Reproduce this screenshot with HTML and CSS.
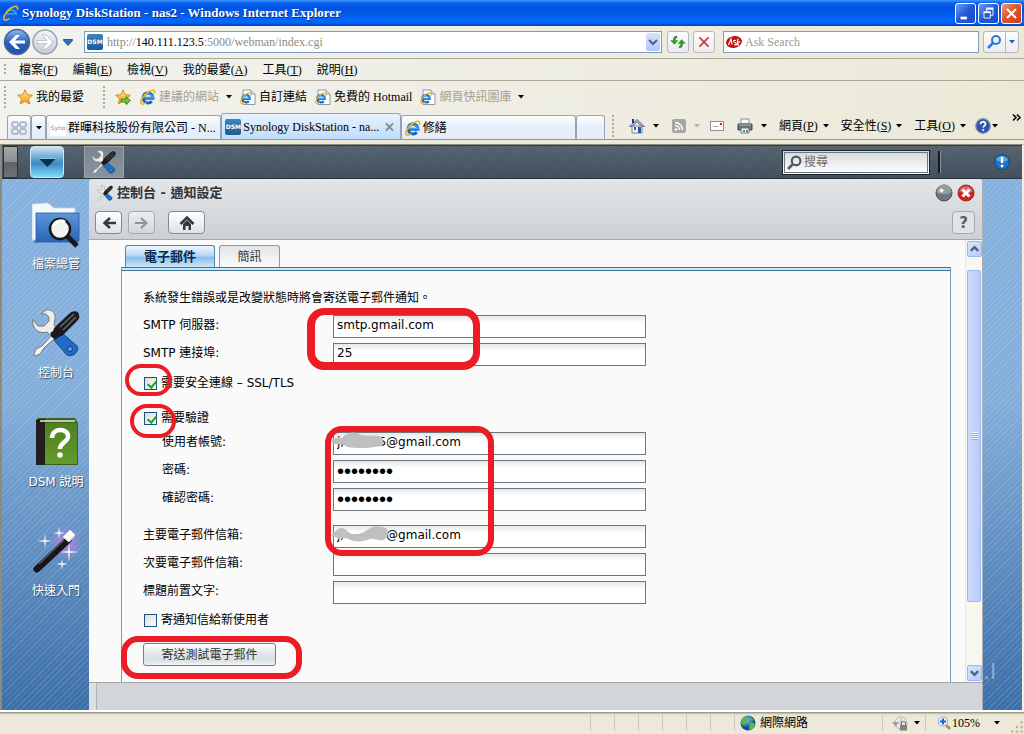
FILE: index.html
```html
<!DOCTYPE html>
<html lang="zh-Hant">
<head>
<meta charset="utf-8">
<title>Synology DiskStation - nas2</title>
<link rel="stylesheet" href="styles.css">
</head>
<body>
<svg class="defs" aria-hidden="true">
  <defs>
    <linearGradient id="gGold" x1="0" y1="0" x2="0" y2="1"><stop offset="0" stop-color="#ffe98a"/><stop offset="1" stop-color="#f59a12"/></linearGradient>
    <linearGradient id="gBlue" x1="0" y1="0" x2="0" y2="1"><stop offset="0" stop-color="#8fbcf0"/><stop offset=".5" stop-color="#2b62bd"/><stop offset="1" stop-color="#1c4fae"/></linearGradient>
    <linearGradient id="gSilver" x1="0" y1="0" x2="0" y2="1"><stop offset="0" stop-color="#f4f6f9"/><stop offset="1" stop-color="#c3cad6"/></linearGradient>
    <linearGradient id="gFolder" x1="0" y1="0" x2="0" y2="1"><stop offset="0" stop-color="#5d97d8"/><stop offset="1" stop-color="#2b62b8"/></linearGradient>
    <linearGradient id="gGreen" x1="0" y1="0" x2="0" y2="1"><stop offset="0" stop-color="#50801f"/><stop offset="1" stop-color="#639a2c"/></linearGradient>
    <radialGradient id="gGlow"><stop offset="0" stop-color="#c879e8" stop-opacity=".9"/><stop offset="1" stop-color="#b98ae6" stop-opacity="0"/></radialGradient>
    <radialGradient id="gGlobe" cx=".4" cy=".3"><stop offset="0" stop-color="#8cc4ff"/><stop offset="1" stop-color="#124a9e"/></radialGradient>
  </defs>
  <symbol id="ie" viewBox="0 0 16 16">
    <path d="M3.500 9.300H13A5 5 0 1 0 11.800 12.200" fill="none" stroke="#1668c4" stroke-width="3"/>
    <path d="M4 8.800H13.500A5.500 5 0 0 0 4.500 6.500" fill="none" stroke="#3ba0ee" stroke-width="1.600"/>
    <path d="M14.300 5C16 .6 12 .4 8.200 3 3.200 6.300-.6 12.600 1.300 14.600c1 1 3.200.2 5-1" fill="none" stroke="#f4b41c" stroke-width="1.600"/>
  </symbol>
  <symbol id="page" viewBox="0 0 16 16">
    <path d="M3 1h8l4 4v10.500H3z" fill="#fff" stroke="#8f98a8"/><path d="M11 1v4h4" fill="#dfe5ef" stroke="#8f98a8"/>
    <svg x="0" y="3" width="12" height="12" viewBox="0 0 16 16"><use href="#ie"/></svg>
  </symbol>
  <symbol id="star" viewBox="0 0 16 16"><path d="M8 .8l2.200 4.900 5.200.5-3.900 3.500 1.200 5.300L8 12.300 3.300 15l1.200-5.300L.6 6.200l5.200-.5z" fill="url(#gGold)" stroke="#d97f10" stroke-width=".9"/></symbol>
  <symbol id="tools" viewBox="0 0 48 48">
    <path d="M9 5l5-4c6-1 10 3 9 9l-1 6 7 8-7 6-7-7c-7 2-13-2-14-8l-1-5 6 7 6 0 5-5 0-4-3-3z" fill="#ededed" stroke="#7a7a7a" stroke-width="1"/>
    <path d="M29 23l16 14c2 3 0 7-4 9-3 1-5 1-7-1L22 31z" fill="#2369c8" stroke="#174883"/>
    <circle cx="38" cy="40" r="2.500" fill="#68a2e8" stroke="#0e3974"/>
    <path d="M21 25L10 37l-6 3-2 5 1 2 5-2 4-6 12-11z" fill="#f5f5f5" stroke="#757575"/>
    <path d="M19 23c3 0 2-3 4-5L38 4c4-3 9-2 9 2 1 2 0 4-2 6L31 26c-2 2-5 1-6 4-3 1-8-3-6-7z" fill="#191b1f"/>
    <path d="M28 18L42 5M31 21L44 8" stroke="#646970" stroke-width="1.500"/>
  </symbol>
  <symbol id="caret" viewBox="0 0 6 4"><path d="M0 0h6L3 3.500z" fill="currentColor"/></symbol>
</svg>

<header class="browser">
  <div class="titlebar">
    <svg class="i16" viewBox="0 0 16 16"><use href="#ie"/></svg>
    <h1 class="title-text">Synology DiskStation - nas2 - Windows Internet Explorer</h1>
    <div class="win-controls">
      <button class="wc" aria-label="最小化"><svg viewBox="0 0 21 21"><path d="M5 14h7v3H5z" fill="#fff"/></svg></button>
      <button class="wc" aria-label="還原"><svg viewBox="0 0 21 21" fill="none" stroke="#fff"><path d="M8.500 8V5.500h7v7H13"/><path d="M8 5h8M5 9h8" stroke-width="2"/><path d="M5.500 9.500h7v6h-7z"/></svg></button>
      <button class="wc wc-close" aria-label="關閉"><svg viewBox="0 0 21 21"><path d="M5.500 5.500l10 10m0-10l-10 10" stroke="#fff" stroke-width="2.200"/></svg></button>
    </div>
  </div>

  <div class="address-row">
    <div class="nav">
      <button class="nav-btn" aria-label="上一頁"><svg viewBox="0 0 28 28"><circle cx="14" cy="14" r="12.500" fill="url(#gBlue)" stroke="#4d618c" stroke-width="1.500"/><path d="M6 14l7-7h4l-5 5.500h10v3H12l5 5.500h-4z" fill="#fff"/></svg></button>
      <button class="nav-btn" aria-label="下一頁"><svg viewBox="0 0 28 28"><circle cx="14" cy="14" r="12" fill="url(#gSilver)" stroke="#98a3b5" stroke-width="1.500"/><path d="M22 14l-7-7h-4l5 5.500H6v3h10L11 21h4z" fill="#fff" stroke="#aab3c2" stroke-width=".7"/></svg></button>
      <button class="nav-more" aria-label="最近的網頁"><svg viewBox="0 0 10 7"><path d="M.5.500h9v1L5 6.500.5 1.500z" fill="#2b72b8" stroke="#12457e" stroke-width=".8"/></svg></button>
    </div>
    <div class="address">
      <span class="dsm-icon">DSM</span>
      <a class="url" href="#address">http://<b>140.111.123.5</b>:5000/webman/index.cgi</a>
      <button class="drop" aria-label="網址清單"><svg viewBox="0 0 14 18"><path d="M3 7l4 4 4-4" fill="none" stroke="#4a5f8c" stroke-width="2"/></svg></button>
    </div>
    <button class="tool-btn" aria-label="重新整理"><svg viewBox="0 0 22 22" fill="#2f9b28"><path d="M10 4C7 4 5.500 5.500 5.500 9H2.500l4.500 5 4.500-5H8.300c0-1.500.5-2.300 1.700-2.500z"/><path d="M12 18c3 0 4.500-1.500 4.500-5h3L15 8l-4.500 5h3.200c0 1.500-.5 2.300-1.700 2.500z"/></svg></button>
    <button class="tool-btn stop" aria-label="停止"><svg viewBox="0 0 22 22"><path d="M6 6l10 10m0-10L6 16" stroke="#cb4240" stroke-width="2"/></svg></button>
    <div class="search">
      <svg class="i16" viewBox="0 0 16 16"><ellipse cx="8" cy="8" rx="8" ry="6" transform="rotate(-12 8 8)" fill="#c4100f"/><path d="M2.500 11l2.500-6 1 5.500m4-4c-3-1-3 1-1 2s1 3-1 2m4-6l-1 7m3-4l-3 2 2 2" fill="none" stroke="#fff" stroke-width="1.200"/></svg>
      <input class="search-input" type="text" placeholder="Ask Search" aria-label="Ask Search">
    </div>
    <div class="search-go">
      <button class="go" aria-label="搜尋"><svg viewBox="0 0 20 20" fill="none" stroke="#2875d8"><circle cx="12" cy="8" r="4" stroke-width="2"/><path d="M9 11l-5 5" stroke-width="2.500"/></svg></button>
      <button class="go-more" aria-label="搜尋選項"><svg class="caret" viewBox="0 0 6 4"><use href="#caret"/></svg></button>
    </div>
  </div>

  <nav class="menu">
    <span class="grip"></span>
    <a href="#m1">檔案(<u>F</u>)</a><a href="#m2">編輯(<u>E</u>)</a><a href="#m3">檢視(<u>V</u>)</a><a href="#m4">我的最愛(<u>A</u>)</a><a href="#m5">工具(<u>T</u>)</a><a href="#m6">說明(<u>H</u>)</a>
  </nav>

  <nav class="favorites">
    <span class="grip tall"></span>
    <a class="fav" href="#f0"><svg class="i16" viewBox="0 0 16 16"><use href="#star"/></svg>我的最愛</a>
    <span class="grip tall fav-grip"></span>
    <button class="plain" aria-label="加到我的最愛列"><svg class="i16" viewBox="0 0 16 16"><use href="#star"/><path d="M6 10h5V7.500l4.500 4-4.500 4V13H6z" fill="#65c94b" stroke="#2c8020" stroke-width=".8"/></svg></button>
    <div class="links">
      <a class="fav dim" href="#f1"><svg class="i16" viewBox="0 0 16 16"><use href="#ie"/></svg>建議的網站<svg class="caret after" viewBox="0 0 6 4"><use href="#caret"/></svg></a>
      <a class="fav" href="#f2"><svg class="i16" viewBox="0 0 16 16"><use href="#page"/></svg>自訂連結</a>
      <a class="fav" href="#f3"><svg class="i16" viewBox="0 0 16 16"><use href="#page"/></svg>免費的 Hotmail</a>
      <a class="fav dim" href="#f4"><svg class="i16" viewBox="0 0 16 16"><use href="#page"/></svg>網頁快訊圖庫<svg class="caret after" viewBox="0 0 6 4"><use href="#caret"/></svg></a>
    </div>
  </nav>

  <div class="tab-row">
    <div class="tabs">
      <button class="tab quick" aria-label="快速索引標籤"><svg class="i16" viewBox="0 0 16 16" fill="#e8ebf2" stroke="#838ca4"><rect x="1" y="2" width="6" height="5" rx="1"/><rect x="9" y="2" width="6" height="5" rx="1"/><rect x="1" y="9" width="6" height="5" rx="1"/><rect x="9" y="9" width="6" height="5" rx="1"/></svg></button>
      <button class="tab quick-more" aria-label="索引標籤清單"><svg class="caret" viewBox="0 0 6 4"><use href="#caret"/></svg></button>
      <button class="tab"><span class="syno">Syno</span><span class="tab-label">群暉科技股份有限公司 - N...</span></button>
      <button class="tab active"><span class="dsm-icon">DSM</span><span class="tab-label">Synology DiskStation - na...</span><svg class="tab-x" viewBox="0 0 10 10"><path d="M1 1l8 8m0-8L1 9" stroke="#7f8794" stroke-width="2"/></svg></button>
      <button class="tab"><svg class="i16" viewBox="0 0 16 16"><use href="#ie"/></svg><span class="tab-label">修繕</span></button>
      <button class="tab new" aria-label="新索引標籤"></button>
    </div>
    <div class="commands">
      <span class="grip tall"></span>
      <button class="cmd" aria-label="首頁"><svg class="i16" viewBox="0 0 16 16"><path d="M3 8h10v7H3z" fill="#eef1f6" stroke="#7b8594"/><path d="M.5 8.500L8 1.500l7.500 7H13L8 4 3 8.500z" fill="#a9b4c4" stroke="#56627a" stroke-width=".8"/><path d="M3 1h2v4H3z" fill="#1434b0"/><path d="M9 9h3v6H9z" fill="#2b56a8"/><path d="M5 9h2v3H5z" fill="#59606e"/></svg><svg class="caret" viewBox="0 0 6 4"><use href="#caret"/></svg></button>
      <button class="cmd pale" aria-label="摘要"><svg class="i14" viewBox="0 0 14 14"><rect width="14" height="14" rx="2" fill="#a5a5a3"/><circle cx="4" cy="10.500" r="1.300" fill="#fff"/><path d="M3 6.500a4.500 4.500 0 0 1 4.500 4.500M3 3.500A7.500 7.500 0 0 1 10.500 11" fill="none" stroke="#fff" stroke-width="1.500"/></svg><svg class="caret" viewBox="0 0 6 4"><use href="#caret"/></svg></button>
      <button class="cmd mail" aria-label="讀取郵件"><svg class="i14" viewBox="0 0 14 10"><rect x=".5" y=".5" width="13" height="9" fill="#fff" stroke="#8b8f98"/><path d="M10 2h2v2h-2z" fill="#d22"/><path d="M3 5.500h5" stroke="#9aa"/></svg></button>
      <button class="cmd" aria-label="列印"><svg class="i16" viewBox="0 0 16 16"><path d="M4 1h8v5H4z" fill="#fff" stroke="#8a8a8a"/><path d="M1 6h14v6H1z" fill="#6a6f78" stroke="#454950"/><path d="M2 7h12" stroke="#b9bdc5"/><path d="M4 10h8v5H4z" fill="#eef" stroke="#777"/><path d="M6 12h2v2H6z" fill="#3a7"/><path d="M9 12h2v2H9z" fill="#38c"/></svg><svg class="caret" viewBox="0 0 6 4"><use href="#caret"/></svg></button>
      <button class="cmd word"><span>網頁(<u>P</u>)</span><svg class="caret" viewBox="0 0 6 4"><use href="#caret"/></svg></button>
      <button class="cmd word"><span>安全性(<u>S</u>)</span><svg class="caret" viewBox="0 0 6 4"><use href="#caret"/></svg></button>
      <button class="cmd word"><span>工具(<u>O</u>)</span><svg class="caret" viewBox="0 0 6 4"><use href="#caret"/></svg></button>
      <button class="cmd help" aria-label="說明"><svg class="i16" viewBox="0 0 16 16"><circle cx="8" cy="8" r="7.300" fill="#2b55ad" stroke="#8b95ad" stroke-width="1.200"/><path d="M5.500 6.200c0-3.200 5-3.200 5-.2 0 1.800-2.300 1.900-2.300 3.500" fill="none" stroke="#fff" stroke-width="1.800"/><circle cx="8.200" cy="12" r="1.100" fill="#fff"/></svg><svg class="caret" viewBox="0 0 6 4"><use href="#caret"/></svg></button>
      <button class="more" aria-label="更多"><svg viewBox="0 0 9 7"><path d="M1 .5l3 3-3 3m4-6l3 3-3 3" fill="none" stroke="#000" stroke-width="1.500"/></svg></button>
    </div>
  </div>
</header>

<main class="desktop">
  <div class="taskbar">
    <button class="show-desktop" aria-label="顯示桌面"></button>
    <button class="main-menu" aria-label="主選單"><svg viewBox="0 0 33 33"><path d="M8 13h18l-9 9z" fill="#0d2f55"/><path d="M8 12.500h18" stroke="#9fd4f2"/></svg></button>
    <button class="task" aria-label="控制台"><svg viewBox="0 0 48 48"><use href="#tools"/></svg></button>
    <div class="dsm-search">
      <svg viewBox="0 0 14 14" fill="none" stroke="#4f565d"><circle cx="8.500" cy="5.500" r="4" stroke-width="2"/><path d="M5 9l-4 4" stroke-width="2.500"/></svg>
      <input class="dsm-search-input" type="text" placeholder="搜尋" aria-label="搜尋">
    </div>
    <span class="split"></span>
    <button class="alert" aria-label="通知"><svg viewBox="0 0 16 16"><circle cx="8" cy="8" r="7.500" fill="#1f74c4" stroke="#0c4687"/><path d="M2 6a6.500 6.500 0 0 1 12 0c-3 2-9 2-12 0z" fill="#5ca5e3"/><path d="M8 3v6" stroke="#fff" stroke-width="2.400"/><circle cx="8" cy="12" r="1.400" fill="#fff"/></svg></button>
  </div>

  <div class="workspace">
    <nav class="shortcuts">
      <a class="shortcut" href="#files"><svg viewBox="0 0 48 48"><path d="M0 4l16-1 6 5h21v32H0z" fill="#f3f8fc" stroke="#c2d2e5" stroke-width=".8"/><path d="M4 13h43v27c0 1-1 2-2 2H2c2 0 2-2 2-4z" fill="url(#gFolder)" stroke="#255aa6" stroke-width=".8"/><path d="M35 36l10 10" stroke="#171b18" stroke-width="5"/><circle cx="28" cy="29" r="10" fill="#f2f2f0" stroke="#14181c" stroke-width="2.500"/><path d="M21 27a8 8 0 0 1 12-5" fill="none" stroke="#fff" stroke-width="3"/></svg>檔案總管</a>
      <a class="shortcut" href="#panel"><svg viewBox="0 0 48 48"><use href="#tools"/></svg>控制台</a>
      <a class="shortcut" href="#help"><svg viewBox="0 0 48 48"><path d="M6 0h37l3 5v42H4V3z" fill="#3b621c"/><path d="M4 2l3-1h6v46H4z" fill="#221e20"/><path d="M13 5h32v41H13z" fill="url(#gGreen)"/><path d="M8 3h35" stroke="#e9f0df" stroke-width="1.500"/><path d="M20 20c0-11 17-10 16-1-1 6-8 5-8 12" fill="none" stroke="#fff" stroke-width="4.500"/><circle cx="28" cy="37" r="2.800" fill="#fff"/></svg>DSM 說明</a>
      <a class="shortcut" href="#start"><svg viewBox="0 0 48 48"><circle cx="34" cy="16" r="17" fill="url(#gGlow)"/><path d="M5 42L36 13" stroke="#17171b" stroke-width="7" stroke-linecap="round"/><path d="M7 37L32 13" stroke="#55555e" stroke-width="1.500"/><path d="M31 10l7-7 5 5-6 7z" fill="#fff" stroke="#e4daf0"/><g fill="#fff" fill-opacity=".85"><path d="M13 6l.8 7 6 1-6 1-.8 7-.8-7-7-1 7-1z"/><path d="M27 0l.8 5 5 1-5 1-.8 5-.8-5-5-1 5-1z"/><path d="M37 16l1 8 9 1-9 1-1 9-1-9-9-1 9-1z"/><path d="M30 32l.8 4 5 1-5 1-.8 5-.8-5-5-1 5-1z"/></g></svg>快速入門</a>
    </nav>

    <section class="window">
      <div class="window-head">
        <div class="window-title">
          <svg class="i16" viewBox="0 0 48 48"><use href="#tools"/></svg>
          <h2 class="window-name">控制台 - 通知設定</h2>
          <button class="orb" aria-label="最小化"><svg viewBox="0 0 18 18"><circle cx="9" cy="9" r="8" fill="#70767b" stroke="#4b5155"/><path d="M1.500 8a7.500 7.500 0 0 1 15 0c-4 3-11 3-15 0z" fill="#969ca0"/><circle cx="6.500" cy="6.500" r="2" fill="#f2f5f6"/></svg></button>
          <button class="orb" aria-label="關閉"><svg viewBox="0 0 18 18"><circle cx="9" cy="9" r="8" fill="#c82520" stroke="#b3211d"/><path d="M2 7a7.500 7.500 0 0 1 14 0c-4 3-10 3-14 0z" fill="#df6a65"/><path d="M5.500 5.500l7 7m0-7l-7 7" stroke="#fff" stroke-width="3"/></svg></button>
        </div>
        <div class="window-tools">
          <button class="wbtn" aria-label="返回"><svg viewBox="0 0 16 16"><path d="M15 8H3m6-5L3.500 8 9 13" fill="none" stroke="#33393e" stroke-width="2.500"/></svg></button>
          <button class="wbtn off" aria-label="前進"><svg viewBox="0 0 16 16"><path d="M1 8h12M7 3l5.500 5L7 13" fill="none" stroke="#8c9297" stroke-width="2"/></svg></button>
          <button class="wbtn home" aria-label="首頁"><svg viewBox="0 0 16 16"><path d="M1.500 9L8 2.500 14.500 9" fill="none" stroke="#33393e" stroke-width="2.500"/><path d="M4 9l4-4 4 4v6H9.500v-4h-3v4H4z" fill="#33393e"/></svg></button>
          <button class="wbtn ask" aria-label="說明">?</button>
        </div>
      </div>

      <div class="window-body">
        <div class="content">
          <div class="page-tabs" role="tablist">
            <button class="page-tab selected" role="tab" aria-selected="true">電子郵件</button>
            <button class="page-tab" role="tab">簡訊</button>
          </div>
          <form class="panel">
            <div class="panel-strip"></div>
            <div class="fields">
              <p class="intro">系統發生錯誤或是改變狀態時將會寄送電子郵件通知。</p>
              <div class="row"><label class="lbl" for="host">SMTP 伺服器:</label><input class="box" id="host" type="text" value="smtp.gmail.com"></div>
              <div class="row"><label class="lbl" for="port">SMTP 連接埠:</label><input class="box" id="port" type="text" value="25"></div>
              <div class="check-row ssl"><input class="check" id="ssl" type="checkbox" checked><label for="ssl">需要安全連線 – SSL/TLS</label></div>
              <div class="check-row auth"><input class="check" id="auth" type="checkbox" checked><label for="auth">需要驗證</label></div>
              <div class="row inner"><label class="lbl" for="user">使用者帳號:</label><span class="cover"><input class="box" id="user" type="text" value="j,         5@gmail.com"><svg class="smudge" viewBox="0 0 60 20"><path d="M1 8c4-4 8-1 11-3 6-6 14-5 18-2 5 1 12 0 18 1 5 1 5 7 3 10-12 2-24 3-35 1-3-3-6-2-8-3-5 1-9-1-7-4z" fill="#bfbfbf"/></svg></span></div>
              <div class="row inner"><label class="lbl" for="pass">密碼:</label><input class="box pass" id="pass" type="password" value="abcdefgh"></div>
              <div class="row inner"><label class="lbl" for="pass2">確認密碼:</label><input class="box pass" id="pass2" type="password" value="abcdefgh"></div>
              <div class="row first-mail"><label class="lbl" for="mail1">主要電子郵件信箱:</label><span class="cover"><input class="box" id="mail1" type="text" value="j,         5@gmail.com"><svg class="smudge" viewBox="0 0 60 20"><path d="M0 10c4-2 6-7 11-7 5 1 7 7 13 6 6 0 9-2 14-5 5-4 14-3 18 0 2 5 0 10-4 11-5 1-9-2-13-1-6 3-16 3-20 1-4-3-8-1-11-1-3-1-5-3-8-4z" fill="#bfbfbf"/></svg></span></div>
              <div class="row"><label class="lbl" for="mail2">次要電子郵件信箱:</label><input class="box" id="mail2" type="text"></div>
              <div class="row"><label class="lbl" for="subject">標題前置文字:</label><input class="box" id="subject" type="text"></div>
              <div class="check-row welcome"><input class="check" id="welcome" type="checkbox"><label for="welcome">寄通知信給新使用者</label></div>
              <button class="send" type="button">寄送測試電子郵件</button>
            </div>
            <span class="mark mark-server"></span>
            <span class="mark mark-ssl"></span>
            <span class="mark mark-auth"></span>
            <span class="mark mark-account"></span>
            <span class="mark mark-send"></span>
          </form>
        </div>
        <div class="scrollbar">
          <button class="sb-btn" aria-label="向上捲動"><svg viewBox="0 0 14 14"><path d="M3 9l4-4 4 4" fill="none" stroke="#4d6185" stroke-width="2.500"/></svg></button>
          <div class="sb-track"><div class="sb-thumb"><span class="sb-grip"></span></div></div>
          <button class="sb-btn" aria-label="向下捲動"><svg viewBox="0 0 14 14"><path d="M3 5l4 4 4-4" fill="none" stroke="#4d6185" stroke-width="2.500"/></svg></button>
        </div>
      </div>
      <div class="window-foot"></div>
    </section>
    <div class="backdrop"><span class="backdrop-text">.l</span></div>
  </div>
</main>

<footer class="status">
  <span class="cell"></span><span class="cell"></span><span class="cell"></span><span class="cell"></span><span class="cell"></span><span class="cell"></span>
  <span class="zone"><svg class="i16" viewBox="0 0 16 16"><circle cx="8" cy="8" r="7.500" fill="url(#gGlobe)"/><path d="M2 4c3-4 6-2 6 0S5 7 5 9s-2 2-4-1zM9 8c3-2 5 0 6 1-1 4-3 6-5 6-2-2 0-4-1-7zM10 2l4 3-3 1z" fill="#5cba3a"/></svg>網際網路</span>
  <span class="lock"><svg class="i16" viewBox="0 0 16 16"><circle cx="9" cy="8" r="6" fill="#e7e7e7" stroke="#b5b5b5"/><path d="M9 4v4H5" fill="none" stroke="#aaa"/><path d="M0 7l4 5 2-5z" fill="#9c9c9c"/><path d="M8 10h7v5.500H8z" fill="#808080"/><path d="M9.500 10V8c0-2 4-2 4 0v2" fill="none" stroke="#777" stroke-width="1.200"/></svg><svg class="caret" viewBox="0 0 6 4"><use href="#caret"/></svg></span>
  <button class="zoom"><svg class="i14" viewBox="0 0 14 14"><path d="M8 8l5 5" stroke="#a98a6a" stroke-width="2.500"/><circle cx="6" cy="5.500" r="4.700" fill="#e6f1fd" stroke="#9cabc6"/><path d="M6 2.500v6M3 5.500h6" stroke="#1b66c9" stroke-width="2"/></svg><span class="pct">105%</span><svg class="caret" viewBox="0 0 6 4"><use href="#caret"/></svg></button>
  <svg class="resize" viewBox="0 0 12 12" fill="#b9b5a0"><path d="M9 1h2v2H9zM9 5h2v2H9zM9 9h2v2H9zM5 5h2v2H5zM5 9h2v2H5zM1 9h2v2H1z"/></svg>
</footer>
</body>
</html>
```

FILE: styles.css
```css
* { box-sizing: border-box; }
body {
  margin: 0;
  min-height: 100vh;
  display: flex;
  flex-direction: column;
  background: #ece9d8;
  color: #000;
  font: 12px/16px "Liberation Serif", "Noto Sans CJK TC", serif;
}
button { padding: 0; margin: 0; border: 0; background: none; font: inherit; color: inherit; }
input { font: inherit; }
a { color: inherit; text-decoration: none; }
svg { display: block; flex: none; }
.defs { position: absolute; width: 0; height: 0; }
.i16 { width: 16px; height: 16px; }
.i14 { width: 14px; height: 14px; }
.caret { width: 6px; height: 4px; }
.grip { flex: none; width: 2px; height: 12px; background: repeating-linear-gradient(#aaa79b 0 2px, transparent 2px 4px); }
.grip.tall { height: 22px; }

/* Title bar */
.titlebar {
  display: flex;
  align-items: center;
  height: 26px;
  padding: 0 2px 0 3px;
  background: linear-gradient(#3d95ff 0, #0a63ee 3px, #0253e0 8px, #0259ea 14px, #0268ff 20px, #0262f5 23px, #0040c0 26px);
}
.title-text {
  flex: 1;
  margin: 0 0 0 3px;
  color: #fff;
  font-size: 13px;
  font-weight: bold;
  text-shadow: 1px 1px 0 #0a2a80;
}
.win-controls { display: flex; gap: 2px; }
.wc {
  width: 21px;
  height: 21px;
  border: 1px solid #fff;
  border-radius: 3px;
  background: linear-gradient(135deg, #6f9bf2, #2357d8 50%, #1b4bcb);
}
.wc-close { background: linear-gradient(135deg, #ee9a7c, #dd5630 45%, #c73c16); }
.wc svg { width: 19px; height: 19px; }

/* Address row */
.address-row {
  display: flex;
  align-items: center;
  height: 33px;
  padding: 0 5px 0 3px;
  border-bottom: 1px solid #aca899;
  background: linear-gradient(90deg, #f2f2ee, #ece9d8);
}
.nav { display: flex; align-items: center; flex: none; width: 81px; }
.nav-btn, .nav-btn svg { width: 28px; height: 28px; }
.nav-more { margin-left: 4px; }
.nav-more svg { width: 10px; height: 7px; }
.address, .search {
  display: flex;
  align-items: center;
  height: 22px;
  border: 1px solid #7f9db9;
  background: #fff;
}
.address { flex: 580 1 0; gap: 4px; padding: 1px 1px 1px 2px; }
.dsm-icon {
  flex: none;
  width: 16px;
  height: 16px;
  border-radius: 2px;
  background: linear-gradient(#3f84bd, #1d5a94);
  color: #fff;
  font: bold 6px/16px "DejaVu Sans", sans-serif;
  text-align: center;
}
.url { flex: 1; color: #8c8c84; }
.url b { color: #000; font-weight: normal; }
.drop { width: 14px; height: 18px; border-radius: 2px; background: linear-gradient(#d7e3fc, #b3c7f8); }
.tool-btn {
  flex: none;
  width: 22px;
  height: 22px;
  margin-left: 5px;
  border: 1px solid #b3b8c2;
  border-radius: 3px;
  background: linear-gradient(#fcfcfc, #ebebf1);
}
.tool-btn svg { width: 20px; height: 20px; }
.stop { margin: 0 8px 0 4px; }
.search { flex: 253 1 0; gap: 3px; padding: 0 2px; }
.search-input { flex: 1; min-width: 0; padding: 0; border: 0; outline: 0; background: none; }
.search-input::placeholder { color: #9a9a92; opacity: 1; }
.search-go { display: flex; margin-left: 4px; border: 1px solid #b3b8c2; border-radius: 3px; background: linear-gradient(#fcfcfc, #ebebf1); }
.go { width: 21px; height: 20px; }
.go svg { width: 20px; height: 20px; }
.go-more { display: flex; align-items: center; justify-content: center; width: 13px; border-left: 1px solid #b3b8c2; color: #1c5fc8; }

/* Menu and favourites */
.menu {
  display: flex;
  align-items: center;
  gap: 15px;
  height: 22px;
  padding-left: 4px;
  border-bottom: 1px solid #aca899;
  background: linear-gradient(90deg, #f2f2ee, #ece9d8);
}
.menu .grip { margin-right: -2px; }
.favorites {
  display: flex;
  align-items: center;
  height: 32px;
  padding-left: 4px;
  background: linear-gradient(90deg, #f2f2ee, #ece9d8);
}
.favorites > .fav { margin-left: 11px; }
.fav { display: flex; align-items: center; gap: 3px; white-space: nowrap; }
.dim { color: #a3a090; }
.after { margin-left: 4px; color: #000; }
.fav-grip { margin: 0 10px 0 19px; }
.links { display: flex; gap: 8px; margin-left: 9px; }

/* Tabs and command bar */
.tab-row {
  display: flex;
  align-items: flex-end;
  justify-content: space-between;
  height: 27px;
  padding: 0 3px 0 7px;
  border-bottom: 1px solid #8f97a6;
  background: linear-gradient(90deg, #f2f2ee, #ece9d8);
}
.tabs { display: flex; align-items: flex-end; flex: 0 1 598px; min-width: 0; }
.tab {
  display: flex;
  align-items: center;
  flex: 1 1 0;
  min-width: 0;
  gap: 2px;
  height: 24px;
  padding: 0 2px 0 3px;
  border: 1px solid #98a2b4;
  border-bottom: 0;
  border-radius: 3px 3px 0 0;
  background: linear-gradient(#fff, #e9f0fa 40%, #e3ebf7);
  white-space: nowrap;
}
.tab-label { flex: 1; text-align: left; }
.tab.active { height: 26px; background: linear-gradient(#e8f2fe, #bfdcfb); padding-right: 6px; }
.tab.quick { flex: 0 0 24px; }
.tab.quick-more { flex: 0 0 15px; padding: 0 4px; }
.tab.new { flex: 0 0 29px; }
.tab-x { width: 9px; height: 10px; }
.syno { flex: none; width: 16px; height: 16px; background: #fff; color: #8a8a8a; font: 6px/16px "DejaVu Sans", sans-serif; }
.commands { display: flex; align-items: center; flex: none; height: 27px; }
.cmd { display: flex; align-items: center; margin-left: 13px; gap: 8px; white-space: nowrap; }
.commands .grip + .cmd { margin-left: 15px; }
.cmd.pale .caret { color: #b5b3a8; }
.cmd.word { gap: 5px; margin-left: 12px; }
.cmd.mail { margin-left: 10px; }
.cmd.help { gap: 1px; margin-left: 9px; }
.more { align-self: flex-start; margin: 2px 0 0 14px; }
.more svg { width: 9px; height: 7px; }

/* DiskStation desktop */
.desktop {
  flex: 1;
  display: flex;
  flex-direction: column;
  margin-top: 4px;
  border: solid #8f8b7a;
  border-width: 1px 0 0 2px;
  border-right: 2px solid #f1efe2;
  background:
    repeating-linear-gradient(135deg, rgba(255,255,255,.12) 0 1px, transparent 1px 4px),
    linear-gradient(#86b2df, #84aeda 45%, #3b6ea8);
}
.taskbar {
  display: flex;
  align-items: center;
  height: 34px;
  padding: 0 12px 0 1px;
  border-top: 1px solid #333c44;
  border-bottom: 1px solid #28333d;
  background: repeating-linear-gradient(135deg, rgba(255,255,255,.04) 0 1px, transparent 1px 3px), linear-gradient(#54626f, #404e5b);
}
.show-desktop { width: 15px; height: 32px; border: 1px solid #2a3138; background: linear-gradient(#a4a8ab, #8b8f92 50%, #5f6468 50%, #6d7276); }
.main-menu {
  width: 34px;
  height: 32px;
  margin-left: 12px;
  border: 1px solid #c9e8f8;
  border-radius: 4px;
  background: linear-gradient(#cfe4f1, #4e99cc 45%, #3d8ac2 55%, #7fdcfa);
}
.main-menu svg { width: 32px; height: 30px; }
.task {
  display: grid;
  place-items: center;
  width: 40px;
  height: 32px;
  margin-left: 20px;
  border: 1px solid #9aa3ac;
  background: linear-gradient(#7b858f, #8a939c);
}
.task svg { width: 24px; height: 24px; }
.dsm-search {
  display: flex;
  align-items: center;
  gap: 2px;
  width: 148px;
  height: 25px;
  margin-left: auto;
  padding: 0 4px;
  border: 1px solid #1c242b;
  outline: 1px solid #6d7882;
  outline-offset: -3px;
  background: linear-gradient(#d5d9dc, #fff);
}
.dsm-search svg { width: 15px; height: 15px; }
.dsm-search-input { flex: 1; min-width: 0; padding: 0; border: 0; outline: 0; background: none; }
.dsm-search-input::placeholder { color: #6d6d6d; opacity: 1; }
.split { width: 3px; height: 22px; margin: 0 53px 0 8px; border-left: 2px solid #14191e; border-right: 1px solid #8a949d; }
.alert, .alert svg { width: 16px; height: 16px; }
.workspace { flex: 1; display: grid; grid-template-columns: 87px 1fr 39px; }
.shortcuts { padding: 21px 0 0 21px; }
.shortcut {
  display: flex;
  flex-direction: column;
  align-items: center;
  gap: 8px;
  height: 109px;
  color: #fff;
  font-family: "DejaVu Sans", "Noto Sans CJK TC", sans-serif;
  text-shadow: 1px 1px 1px #33475c;
  white-space: nowrap;
}
.shortcut svg { width: 48px; height: 48px; }
.backdrop { display: flex; align-items: flex-end; padding-bottom: 26px; overflow: hidden; }
.backdrop-text { color: rgba(255,255,255,.4); font: 22px/24px "DejaVu Sans", sans-serif; }

/* Application window */
.window {
  display: flex;
  flex-direction: column;
  border-right: 1px solid #a7adb2;
  border-radius: 4px 4px 0 0;
  background: #fafafa;
  font-family: "DejaVu Sans", "Noto Sans CJK TC", sans-serif;
  overflow: hidden;
}
.window-head { height: 61px; border-bottom: 1px solid #a5a8ab; background: linear-gradient(#e2e6e9, #cdd1d5); }
.window-title { display: flex; align-items: center; gap: 4px; height: 27px; padding: 0 7px 0 8px; }
.window-name { flex: 1; margin: 0; color: #333; font-size: 13px; font-weight: bold; }
.orb, .orb svg { width: 18px; height: 18px; }
.window-tools { display: flex; align-items: center; height: 33px; padding: 0 7px 0 6px; }
.wbtn {
  display: grid;
  place-items: center;
  width: 27px;
  height: 23px;
  margin-right: 6px;
  border: 1px solid #858b90;
  border-radius: 4px;
  background: linear-gradient(#fff, #dfe3e7);
}
.wbtn svg { width: 16px; height: 16px; }
.wbtn.off { border-color: #a4a9ae; background: linear-gradient(#eceff1, #d2d6da); }
.wbtn.home { width: 37px; margin-left: 7px; }
.wbtn.ask { width: 23px; margin: 0 0 0 auto; border-color: #a4a9ae; color: #596066; font: bold 15px/18px "DejaVu Sans", sans-serif; background: #e0e4e7; }
.window-body { flex: 1; display: flex; }
.content { flex: 1; display: flex; flex-direction: column; padding: 5px 14px 0 32px; }
.page-tabs { display: flex; gap: 4px; padding-left: 4px; }
.page-tab {
  height: 22px;
  width: 61px;
  border: 1px solid #8d9ba8;
  border-bottom: 0;
  border-radius: 3px 3px 0 0;
  color: #333;
  line-height: 18px;
  background: linear-gradient(#e1e5e8, #fafafa);
}
.page-tab.selected {
  width: 90px;
  border-color: #4786ad;
  color: #06294d;
  font-size: 13px;
  font-weight: bold;
  background: linear-gradient(#f1f8fe, #b5d8f6 45%, #8cc0ec 55%, #cde9f9);
}
.panel { position: relative; flex: 1; border: 1px solid #6f9fbe; border-top-color: #3c7498; border-bottom: 0; }
.panel-strip { height: 3px; border-bottom: 1px solid #3c7498; background: #cfe6f4; }
.fields { padding: 18px 0 15px 21px; }
.intro { margin: 0 0 5px; line-height: 18px; }
.row { display: flex; align-items: center; height: 28px; }
.lbl { width: 190px; padding-bottom: 3px; }
.inner .lbl { padding-left: 19px; }
.box {
  width: 313px;
  height: 23px;
  padding: 0 3px 3px;
  border: 1px solid #70777c;
  outline: 0;
  background: linear-gradient(#e4e9eb, #fff 7px);
}
.pass { padding-bottom: 0; font: 20px "Liberation Sans", sans-serif; }
.cover { position: relative; }
.smudge { position: absolute; left: -2px; top: 0; width: 60px; height: 20px; }
.check-row { display: flex; align-items: center; gap: 4px; height: 22px; }
.ssl { margin-top: 4px; }
.auth { margin-top: 13px; }
.first-mail { margin-top: 9px; }
.welcome { margin-top: 3px; }
.check {
  appearance: none;
  width: 13px;
  height: 13px;
  margin: 0 0 0 1px;
  border: 1px solid #1c5180;
  background: linear-gradient(135deg, #dcdcd7, #fff);
}
.check:checked::after {
  content: "";
  display: block;
  width: 4px;
  height: 7px;
  margin: 1px 0 0 4px;
  border: solid #21a121;
  border-width: 0 2px 2px 0;
  transform: rotate(40deg);
}
.send {
  display: block;
  width: 133px;
  height: 23px;
  margin-top: 12px;
  border: 1px solid #777d82;
  border-radius: 3px;
  color: #333;
  background: linear-gradient(#fff, #dfe4e8 50%, #dbe1e5 80%, #f3f5f6);
}

/* Hand-drawn highlights */
.mark { position: absolute; border: 6px solid #ec1c24; border-radius: 17px; pointer-events: none; }
.mark-server { left: 185px; top: 40px; width: 173px; height: 62px; border-width: 7px 7px 8px 8px; }
.mark-ssl { left: 3px; top: 96px; width: 47px; height: 32px; border-width: 4px; }
.mark-auth { left: 8px; top: 136px; width: 46px; height: 34px; border-width: 4px; }
.mark-account { left: 203px; top: 158px; width: 169px; height: 130px; }
.mark-send { left: -1px; top: 368px; width: 181px; height: 43px; }

/* Scrollbar */
.scrollbar { display: flex; flex-direction: column; width: 17px; padding: 1px; border-left: 1px solid #e6e6de; background: #f7f6ef; }
.sb-btn { width: 15px; height: 16px; border: 1px solid #9db7ee; border-radius: 2px; background: linear-gradient(135deg, #dbe6fe, #b5c9f9); }
.sb-btn svg { width: 13px; height: 14px; }
.sb-track { flex: 1; display: grid; grid-template-rows: 13fr 332fr 63fr; }
.sb-thumb { grid-row: 2; display: grid; place-items: center; border: 1px solid #9db7ee; border-radius: 2px; background: linear-gradient(90deg, #ccdafd, #b8cbfa); }
.sb-grip { width: 7px; height: 8px; background: repeating-linear-gradient(#eef4fe 0 1px, #8cb0f8 1px 2px); }
.window-foot { height: 28px; border-top: 1px solid #a3a7ab; background: linear-gradient(90deg, #dde0e3 7px, #aeb2b6 7px 8px, #d2d6da 8px); }

/* Status bar */
.status {
  display: flex;
  align-items: center;
  justify-content: flex-end;
  height: 24px;
  border-top: 2px solid #fff;
  background: linear-gradient(#9e9c8c 0 1px, #e2dfcd 2px, #ece9d8 5px);
}
.cell { width: 24px; height: 16px; border-left: 1px solid #cbc7b6; }
.zone, .lock, .zoom { display: flex; align-items: center; height: 16px; border-left: 1px solid #cbc7b6; }
.zone { gap: 4px; width: 148px; padding-left: 5px; }
.lock { gap: 6px; width: 43px; padding-left: 9px; }
.zoom { gap: 1px; width: 85px; padding-left: 11px; }
.pct { flex: 1; text-align: left; }
.zoom .caret { margin-right: 10px; }
.resize { width: 14px; height: 14px; align-self: flex-end; }
```
